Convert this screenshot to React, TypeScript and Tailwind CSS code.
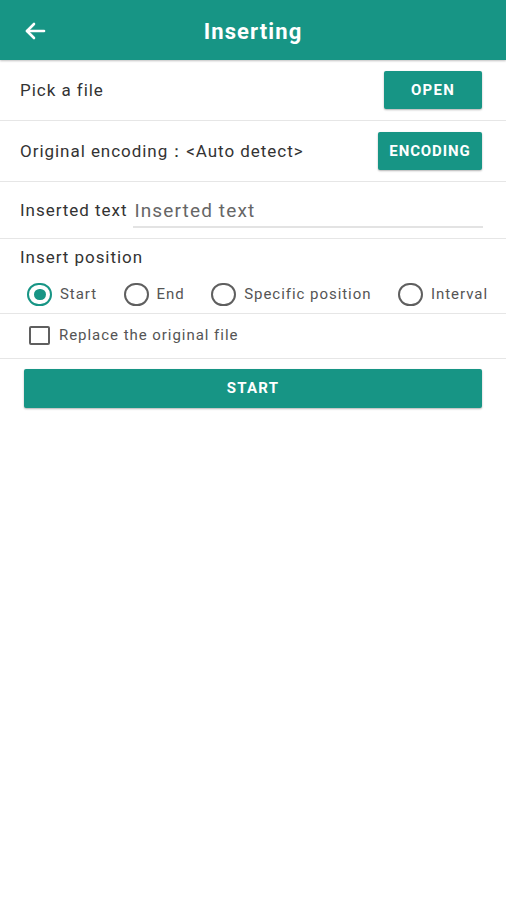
import { useState } from 'react'

const options = ['Start', 'End', 'Specific position', 'Interval']

const Radio = ({ label, checked, onClick }: { label: string; checked: boolean; onClick: () => void }) => (
    <button className="flex items-center gap-[8px]" onClick={onClick}>
        <span className={`flex h-[23px] w-[25px] items-center justify-center rounded-full border-2 ${checked ? 'border-[#179585]' : 'border-[#5f5f5f]'}`}>
            {checked && <span className="h-[11px] w-[12px] rounded-full bg-[#179585]"></span>}
        </span>
        <span className="text-[15px] text-[#555]">{label}</span>
    </button>
)

const App = () => {
    const [pos, setPos] = useState('Start')
    const [replace, setReplace] = useState(false)

    return (
        <div className="min-h-screen bg-white tracking-[0.06em]" style={{ fontFamily: 'Roboto, "Noto Sans", sans-serif' }}>
            <div className="relative flex h-[60px] items-center justify-center bg-[#179585] shadow-[0_1px_2px_rgba(0,0,0,0.25)]">
                <svg className="absolute left-[24px] top-[21px]" width="22" height="20" viewBox="0 0 22 20" fill="none" stroke="white" strokeWidth="2.6" strokeLinecap="round" strokeLinejoin="round">
                    <path d="M20 10H3" />
                    <path d="M10 3L3 10l7 7" />
                </svg>
                <h1 className="mt-[3px] text-[22px] font-bold tracking-[0.05em] text-white">Inserting</h1>
            </div>

            <div className="flex h-[61px] items-center justify-between border-b border-[#e6e6e6] pl-[20px] pr-[24px]">
                <span className="mt-[2px] text-[17px] text-[#333]">Pick a file</span>
                <button className="h-[38px] w-[98px] rounded-[2px] bg-[#179585] text-[15px] font-bold tracking-[0.08em] text-white shadow-[0_1px_2px_rgba(0,0,0,0.3)]">OPEN</button>
            </div>

            <div className="flex h-[61px] items-center justify-between border-b border-[#e6e6e6] pl-[20px] pr-[24px]">
                <span className="mt-[2px] text-[17px] text-[#333]">Original encoding：<span>&lt;Auto detect&gt;</span></span>
                <button className="h-[38px] w-[104px] rounded-[2px] bg-[#179585] text-[15px] font-bold tracking-[0.06em] text-white shadow-[0_1px_2px_rgba(0,0,0,0.3)]">ENCODING</button>
            </div>

            <div className="flex h-[57px] items-center border-b border-[#e6e6e6] pl-[20px] pr-[23px]">
                <span className="mt-[1px] text-[17px] text-[#333] whitespace-nowrap">Inserted text</span>
                <input
                    className="ml-[6px] mt-[2px] h-[34px] min-w-0 flex-1 border-b-2 border-[#e3e3e3] bg-transparent px-[1px] text-[19px] tracking-[0.06em] text-[#444] outline-none placeholder:text-[#666]"
                    placeholder="Inserted text"
                />
            </div>

            <div className="border-b border-[#e6e6e6] pb-[7px] pt-[6px]">
                <div className="pl-[20px] text-[17px] text-[#333]">Insert position</div>
                <div className="mt-[12px] flex items-center justify-between pl-[27px] pr-[18px]">
                    {options.map(o => (
                        <Radio key={o} label={o} checked={pos === o} onClick={() => setPos(o)} />
                    ))}
                </div>
            </div>

            <div className="flex h-[45px] items-center border-b border-[#e6e6e6] pl-[29px]">
                <button className="flex items-center gap-[9px]" onClick={() => setReplace(!replace)}>
                    <span className={`flex h-[19px] w-[21px] items-center justify-center rounded-[2px] border-2 ${replace ? 'border-[#179585] bg-[#179585]' : 'border-[#5f5f5f]'}`}>
                        {replace && (
                            <svg width="12" height="10" viewBox="0 0 12 10" fill="none" stroke="white" strokeWidth="2">
                                <path d="M1 5l3.5 3.5L11 1.5" />
                            </svg>
                        )}
                    </span>
                    <span className="text-[15px] text-[#555]">Replace the original file</span>
                </button>
            </div>

            <div className="px-[24px] pt-[10px]">
                <button className="h-[39px] w-full rounded-[2px] bg-[#179585] text-[15px] font-bold tracking-[0.08em] text-white shadow-[0_1px_2px_rgba(0,0,0,0.3)]">START</button>
            </div>
        </div>
    )
}

export default App
